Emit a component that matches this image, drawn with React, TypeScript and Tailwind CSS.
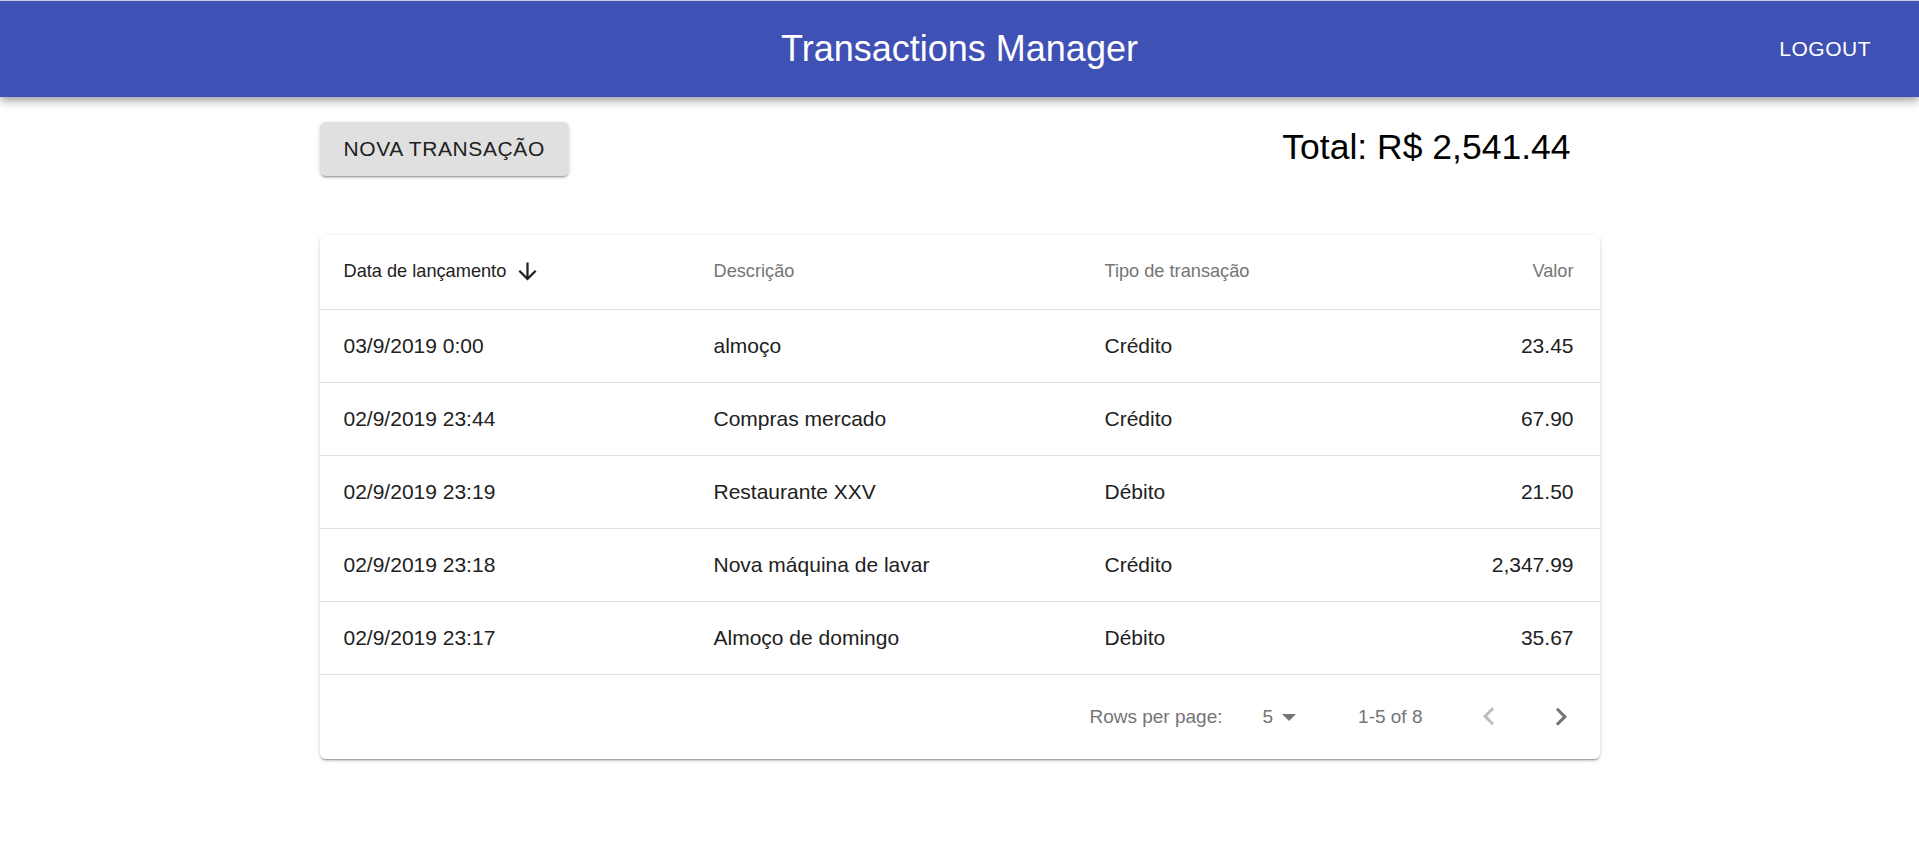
type Transaction = {
  date: string;
  description: string;
  type: string;
  value: string;
};

const transactions: Transaction[] = [
  { date: "03/9/2019 0:00", description: "almoço", type: "Crédito", value: "23.45" },
  { date: "02/9/2019 23:44", description: "Compras mercado", type: "Crédito", value: "67.90" },
  { date: "02/9/2019 23:19", description: "Restaurante XXV", type: "Débito", value: "21.50" },
  { date: "02/9/2019 23:18", description: "Nova máquina de lavar", type: "Crédito", value: "2,347.99" },
  { date: "02/9/2019 23:17", description: "Almoço de domingo", type: "Débito", value: "35.67" },
];

const cols = "grid grid-cols-[370px_391px_1fr_260px] items-center px-[24px]";

export default function App() {
  return (
    <div className="min-h-screen bg-white text-[#212121]" style={{ fontFamily: '"Liberation Sans", Arial, sans-serif' }}>
      <header className="relative z-10 h-[97px] border-t border-[#c9cce3] bg-[#3f51b5] text-white shadow-[0_3px_6px_-1px_rgba(0,0,0,0.2),0_6px_8px_0_rgba(0,0,0,0.14),0_1px_15px_0_rgba(0,0,0,0.12)]">
        <div className="relative flex h-full items-center justify-center">
          <h1 className="text-[36px] leading-none">Transactions Manager</h1>
          <button className="absolute right-[48px] top-1/2 -translate-y-1/2 text-[21px] uppercase tracking-[0.5px]">Logout</button>
        </div>
      </header>

      <main className="mx-auto w-[1280px]">
        <div className="flex h-[138px] items-start justify-between pt-[25px]">
          <button className="h-[54px] rounded-[6px] bg-[#e0e0e0] px-[24px] text-[21px] uppercase tracking-[0.6px] text-[#212121] shadow-[0_3px_1px_-2px_rgba(0,0,0,0.2),0_2px_2px_0_rgba(0,0,0,0.14),0_1px_5px_0_rgba(0,0,0,0.12)]">
            Nova transação
          </button>
          <div className="mr-[29px] mt-[8px] text-[35.5px] leading-none text-black">Total: R$ 2,541.44</div>
        </div>

        <div className="overflow-hidden rounded-[6px] bg-white shadow-[0_3px_1px_-2px_rgba(0,0,0,0.2),0_2px_2px_0_rgba(0,0,0,0.14),0_1px_5px_0_rgba(0,0,0,0.12)]">
          <div className={`${cols} h-[75px] border-b border-[#e0e0e0] text-[18.2px] text-[#757575]`}>
            <div className="flex items-center text-[#212121]">
              Data de lançamento
              <svg viewBox="0 0 24 24" className="ml-[8px] h-[27px] w-[27px] fill-[#212121]">
                <path d="M20 12l-1.41-1.41L13 16.17V4h-2v12.17l-5.58-5.59L4 12l8 8 8-8z" />
              </svg>
            </div>
            <div>Descrição</div>
            <div>Tipo de transação</div>
            <div className="pr-[2px] text-right">Valor</div>
          </div>

          {transactions.map((t) => (
            <div key={t.date + t.description} className={`${cols} h-[73px] border-b border-[#e0e0e0] text-[21px]`}>
              <div>{t.date}</div>
              <div>{t.description}</div>
              <div>{t.type}</div>
              <div className="pr-[2px] text-right">{t.value}</div>
            </div>
          ))}

          <div className="flex h-[84px] items-center justify-end pr-[21px] text-[19px] text-[#757575]">
            <span>Rows per page:</span>
            <span className="ml-[40px]">5</span>
            <svg viewBox="0 0 14 7" className="ml-[9px] h-[7px] w-[14px] fill-[#757575]">
              <path d="M0 0h14L7 7z" />
            </svg>
            <span className="ml-[62px]">1-5 of 8</span>
            <svg viewBox="0 0 24 24" className="ml-[48px] h-[36px] w-[36px] fill-[#bdbdbd]">
              <path d="M15.41 16.09l-4.58-4.59 4.58-4.59L14 5.5l-6 6 6 6z" />
            </svg>
            <svg viewBox="0 0 24 24" className="ml-[36px] h-[36px] w-[36px] fill-[#757575]">
              <path d="M8.59 16.34l4.58-4.59-4.58-4.59L10 5.75l6 6-6 6z" />
            </svg>
          </div>
        </div>
      </main>
    </div>
  );
}
